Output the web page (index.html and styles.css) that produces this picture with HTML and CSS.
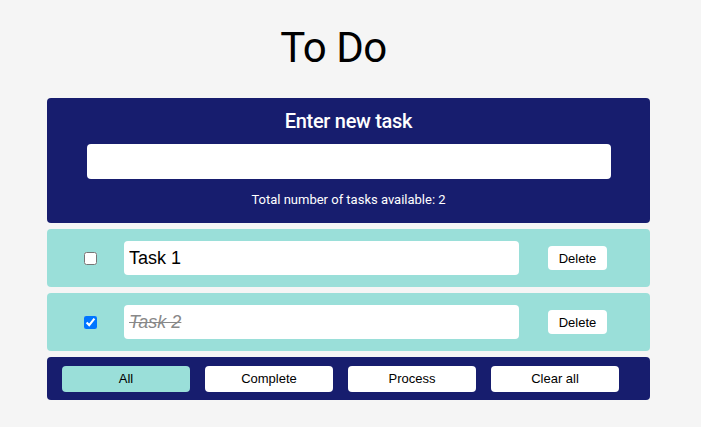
FILE: index.html
```html
<!DOCTYPE html>
<html>
<head>
<meta charset="utf-8">
<link rel="stylesheet" href="styles.css">
</head>
<body>
<div class="app">
  <h1 class="title">To Do</h1>
  <div class="panel">
    <h2 class="panel-title">Enter new task</h2>
    <input class="new-input" type="text">
    <p class="count">Total number of tasks available: 2</p>
  </div>
  <div class="row">
    <div class="check-cell"><input type="checkbox" class="check"></div>
    <input class="task-input" type="text" value="Task 1">
    <button class="del">Delete</button>
  </div>
  <div class="row">
    <div class="check-cell"><input type="checkbox" class="check" checked></div>
    <input class="task-input done" type="text" value="Task 2">
    <button class="del">Delete</button>
  </div>
  <div class="footer">
    <button class="fbtn active">All</button>
    <button class="fbtn">Complete</button>
    <button class="fbtn">Process</button>
    <button class="fbtn">Clear all</button>
  </div>
</div>
</body>
</html>
```
FILE: styles.css
```css
html, body { margin: 0; padding: 0; }
body { background: #f5f5f5; font-family: Roboto, "Liberation Sans", sans-serif; }
.app { width: 603px; margin: 0 0 0 47px; padding-top: 21px; display: flex; flex-direction: column; gap: 6px; }
.title { margin: 0 0 18px; padding-right: 30px; text-align: center; font-weight: 400; font-size: 42px; line-height: 53px; letter-spacing: -0.5px; color: #000; }
.panel { background: #171d6e; border-radius: 4px; display: flex; flex-direction: column; align-items: center; padding: 10px 0 16px; }
.panel-title { margin: 0; color: #fff; font-weight: 500; font-size: 20px; line-height: 27px; letter-spacing: -0.3px; }
.new-input { margin-top: 9px; width: 524px; height: 35px; box-sizing: border-box; border: none; border-radius: 4px; background: #fff; }
.count { margin: 13px 0 0; color: #fff; font-size: 13px; line-height: 15px; }
.row { background: #9adfd9; border-radius: 4px; height: 58px; display: flex; align-items: center; }
.check-cell { width: 77px; display: flex; padding-left: 37px; box-sizing: border-box; }
.check { margin: 0; width: 13px; height: 13px; }
.task-input { width: 395px; height: 34px; box-sizing: border-box; border: none; border-radius: 4px; background: #fff; padding: 0 5px; font-family: "Liberation Sans", Arial, sans-serif; font-size: 18px; color: #000; }
.task-input.done { text-decoration: line-through; font-style: italic; color: #888; }
.del { margin-left: 29px; width: 59px; height: 24px; border: none; border-radius: 4px; background: #fff; font-family: "Liberation Sans", Arial, sans-serif; font-size: 13px; color: #000; padding: 0; }
.footer { background: #171d6e; border-radius: 4px; height: 43px; display: flex; align-items: center; padding-left: 15px; gap: 15px; }
.fbtn { width: 128px; height: 26px; border: none; border-radius: 4px; background: #fff; font-family: "Liberation Sans", Arial, sans-serif; font-size: 13px; color: #000; padding: 0; }
.fbtn.active { background: #9adfd9; }
```
